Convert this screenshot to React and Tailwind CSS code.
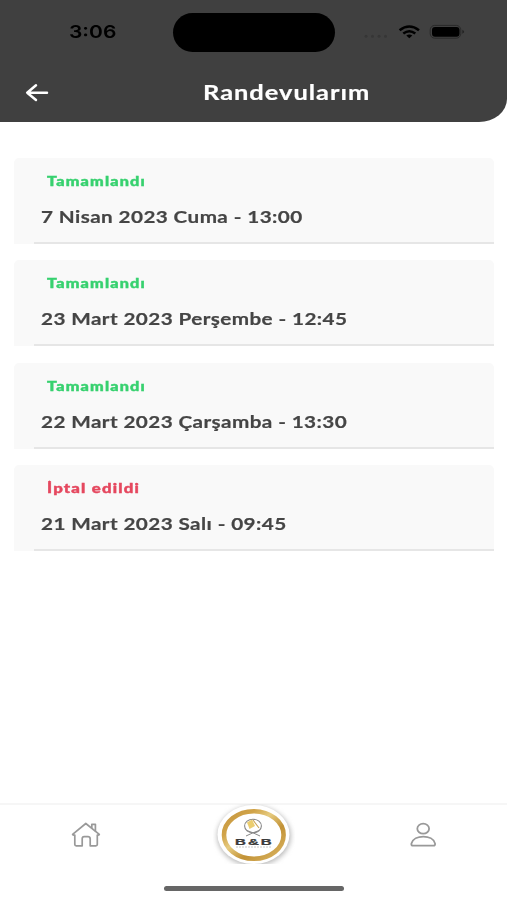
const appointments = [
  { status: 'Tamamlandı', date: '7 Nisan 2023 Cuma - 13:00', done: true },
  { status: 'Tamamlandı', date: '23 Mart 2023 Perşembe - 12:45', done: true },
  { status: 'Tamamlandı', date: '22 Mart 2023 Çarşamba - 13:30', done: true },
  { status: 'İptal edildi', date: '21 Mart 2023 Salı - 09:45', done: false },
];

function StatusBar() {
  return (
    <div className="flex h-[64px] items-center">
      <div className="w-[173px] pl-[69px]">
        <span className="inline-block origin-left scale-x-[1.2] font-['Inter'] text-[17.5px] font-semibold leading-[24px] text-black">3:06</span>
      </div>
      <div className="h-[39px] w-[162px] rounded-full bg-black" />
      <svg className="ml-[25px] h-[20px] w-[112px]" viewBox="360 22 112 20" fill="none">
        <g fill="#363636">
          <circle cx="366" cy="36.3" r="1.5" /><circle cx="372.5" cy="36.3" r="1.5" />
          <circle cx="379" cy="36.3" r="1.5" /><circle cx="385.5" cy="36.3" r="1.5" />
        </g>
        <g stroke="#000" strokeWidth="2.6">
          <path d="M399.6 30.2Q409.3 22.8 419 30.2" />
          <path d="M403.3 33.5Q409.3 29 415.3 33.5" />
        </g>
        <path d="M406.3 35.6Q409.3 33.4 412.3 35.6L409.3 38.3Z" fill="#000" />
        <rect x="430.2" y="25.4" width="30.6" height="12.8" rx="4.5" stroke="#292929" />
        <rect x="432" y="27" width="27.5" height="9.8" rx="3" fill="#000" />
        <path d="M462.3 29.8Q466 31.7 462.3 33.7Z" fill="#242424" />
      </svg>
    </div>
  );
}

function Header() {
  return (
    <header className="h-[122px] rounded-br-[28px_23px] bg-[#404040]">
      <StatusBar />
      <div className="flex h-[56px] items-center">
        <svg className="ml-[25px] h-[20px] w-[25px]" viewBox="0 0 25 20" fill="none" stroke="#fff" strokeWidth="2.5" strokeLinecap="round" strokeLinejoin="round">
          <path d="M22 10.7H2.3M11 3.3L2.2 10.7L11 18" />
        </svg>
        <h1 className="ml-[153px] origin-left scale-x-[1.24] whitespace-nowrap font-['Lato'] text-[20.5px] font-bold tracking-[0.8px] text-white [-webkit-text-stroke:0.2px]">Randevularım</h1>
      </div>
    </header>
  );
}

function AppointmentCard({ item }) {
  return (
    <div className="flex h-[86px] flex-col rounded-t-[5px] bg-[#f9f9f9] pt-[15px]">
      <span className={`ml-[33px] h-[17px] w-max origin-left font-['Lato'] text-[12.5px] font-black leading-[17px] tracking-[0.9px] [-webkit-text-stroke:0.4px] ${item.done ? 'scale-x-[1.3] text-[#37d16f]' : 'scale-x-[1.34] text-[#e5485f]'}`}>
        {item.status}
      </span>
      <span className="ml-[27px] mt-[15px] h-[24px] w-max origin-left scale-x-[1.217] font-['Lato'] text-[17px] font-bold leading-[24px] tracking-[0.33px] text-[#454545] [-webkit-text-stroke:0.2px]">
        {item.date}
      </span>
      <div className="ml-[20px] mt-auto h-[2px] bg-[#e6e6e6]" />
    </div>
  );
}

function Logo() {
  return (
    <svg className="h-[60px] w-[82px]" viewBox="214 804 82 60">
      <defs>
        <linearGradient id="gold" x1="0" y1="0" x2="1" y2="1">
          <stop offset="0" stopColor="#c4943f" />
          <stop offset=".25" stopColor="#d1a449" />
          <stop offset=".42" stopColor="#e6cb80" />
          <stop offset=".65" stopColor="#c29236" />
          <stop offset="1" stopColor="#dbb664" />
        </linearGradient>
        <filter id="shade" x="-20%" y="-20%" width="140%" height="140%"><feGaussianBlur stdDeviation="2.5" /></filter>
      </defs>
      <ellipse cx="255" cy="836" rx="37" ry="30" fill="#bbb" filter="url(#shade)" />
      <ellipse cx="254.5" cy="834.5" rx="36" ry="29.5" fill="#fff" />
      <ellipse cx="254.8" cy="835" rx="29.8" ry="23.8" fill="#fff" stroke="url(#gold)" strokeWidth="4.6" />
      <ellipse cx="254" cy="826" rx="8.4" ry="6.8" fill="none" stroke="#888" strokeWidth="1.1" />
      <path d="M248 822.5L253 819.5L256 826L250.5 829Z" fill="#ebcd6e" />
      <path d="M254 820L260 828" stroke="#c9a354" strokeWidth="1.1" />
      <path d="M247 836L253.5 833L260 830.5M261 836L254.5 833L248 830.5" fill="none" stroke="#888" strokeWidth="1" />
      <g transform="translate(236 844.8) scale(1.8 1)" fontFamily="Liberation Sans, sans-serif" fontSize="8.4" fontWeight="700" fill="#3b3b3b" stroke="#3b3b3b" strokeWidth=".25">
        <text letterSpacing="1.1">B&amp;B</text>
      </g>
      <path d="M237 847H272" stroke="#bbb" strokeWidth=".8" strokeDasharray="2 1" />
    </svg>
  );
}

function BottomNav() {
  return (
    <nav className="mt-auto h-[97px] border-t-2 border-[#f6f6f6] bg-white">
      <div className="flex h-[60px] items-start">
        <svg className="ml-[71px] mt-[17px] h-[26px] w-[30px]" viewBox="0 0 30 26" fill="none" stroke="#999" strokeWidth="1.7" strokeLinejoin="round" strokeLinecap="round">
          <path d="M1.6 12.3L14.8 1.5L28.3 12.3Q28.5 13.2 26.3 13V22.5Q26.3 23.8 24.8 23.8H19.2V16.8Q19 14.7 17 14.7H13.2Q11.2 14.7 11.2 16.8V23.8H5.2Q3.8 23.8 3.8 22.5V13Q1.6 13.3 1.6 12.3Z" />
          <path d="M20.8 5.5V2.3H24.4V8.8" />
        </svg>
        <div className="-mt-px ml-[112px]"><Logo /></div>
        <svg className="ml-[114px] mt-[17px] h-[26px] w-[30px]" viewBox="0 0 30 26" fill="none" stroke="#999" strokeWidth="1.8">
          <ellipse cx="14.2" cy="6.7" rx="5.9" ry="5" />
          <path d="M4 23.6Q2 23.6 2.4 21.6C4.9 12.3 23.8 12.3 26.1 21.6Q26.3 23.6 24.5 23.6Z" />
        </svg>
      </div>
      <div className="ml-[164px] mt-[21px] h-[5px] w-[180px] rounded-full bg-[#666]" />
    </nav>
  );
}

export default function App() {
  return (
    <div className="flex h-[900px] w-[507px] flex-col overflow-hidden bg-white">
      <Header />
      <main className="flex flex-col gap-[16.4px] pl-[14px] pr-[13px] pt-[36px]">
        {appointments.map(item => <AppointmentCard key={item.date} item={item} />)}
      </main>
      <BottomNav />
    </div>
  );
}
